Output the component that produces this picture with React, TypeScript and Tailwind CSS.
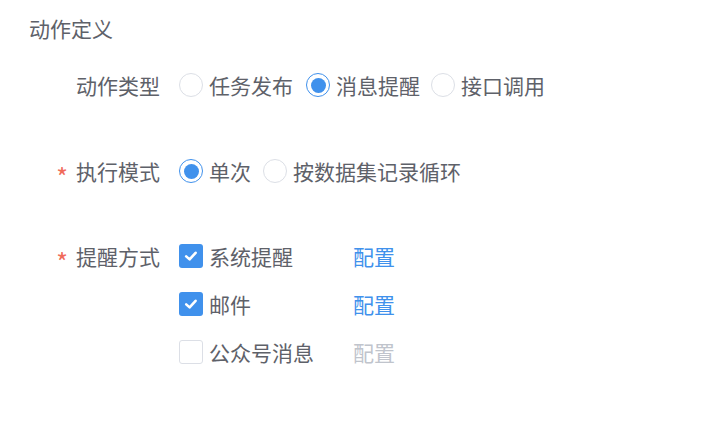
import React from "react";

function Radio({ checked, label }: { checked?: boolean; label: string }) {
  return (
    <div className="flex items-center">
      {checked ? (
        <span className="flex h-[24px] w-[24px] items-center justify-center rounded-full border-[1.5px] border-[#4091ec] bg-white">
          <span className="h-[15px] w-[15px] rounded-full bg-[#4091ec]" />
        </span>
      ) : (
        <span className="h-[24px] w-[24px] rounded-full border border-[#dcdfe6] bg-white" />
      )}
      <span className="ml-[6px]">{label}</span>
    </div>
  );
}

function Checkbox({ checked, label, disabledLink }: { checked?: boolean; label: string; disabledLink?: boolean }) {
  return (
    <div className="flex h-[48px] items-center">
      <div className="flex w-[174px] items-center">
        {checked ? (
          <span className="flex h-[24px] w-[24px] items-center justify-center rounded-[3px] bg-[#4091ec]">
            <svg width="16" height="16" viewBox="0 0 16 16">
              <path d="M3.2 8.4 L6.6 11.4 L12.6 4.8" fill="none" stroke="white" strokeWidth="2.6" strokeLinecap="round" strokeLinejoin="round" />
            </svg>
          </span>
        ) : (
          <span className="h-[24px] w-[24px] rounded-[3px] border border-[#dcdfe6] bg-white" />
        )}
        <span className="ml-[6px]">{label}</span>
      </div>
      <span className={disabledLink ? "text-[#c0c4cc]" : "text-[#4091ec]"}>配置</span>
    </div>
  );
}

function Label({ text, required }: { text: string; required?: boolean }) {
  return (
    <div className="flex h-[48px] w-[160px] shrink-0 items-center justify-end">
      {required && (
        <span className="relative top-[5px] mr-[8px] text-[25px] leading-[30px] text-[#f06a5a]">*</span>
      )}
      <span>{text}</span>
    </div>
  );
}

export default function App() {
  return (
    <div
      className="h-[421px] w-[717px] bg-white text-[21px] leading-[30px] text-[#5e6169]"
      style={{ fontFamily: '"Noto Sans CJK SC", "Noto Sans", sans-serif' }}
    >
      <div className="pl-[29px] pt-[13px] text-[#5e6169]">动作定义</div>
      <div className="mt-[18px] flex flex-col gap-[38px]">
        <div className="flex">
          <Label text="动作类型" />
          <div className="ml-[19px] flex h-[48px] items-center gap-[13px]">
            <Radio label="任务发布" />
            <Radio checked label="消息提醒" />
            <div className="-ml-[2px]">
              <Radio label="接口调用" />
            </div>
          </div>
        </div>
        <div className="flex">
          <Label text="执行模式" required />
          <div className="ml-[19px] flex h-[48px] items-center gap-[12px]">
            <Radio checked label="单次" />
            <Radio label="按数据集记录循环" />
          </div>
        </div>
        <div className="-mt-[1px] flex">
          <Label text="提醒方式" required />
          <div className="ml-[19px] flex flex-col">
            <Checkbox checked label="系统提醒" />
            <Checkbox checked label="邮件" />
            <Checkbox label="公众号消息" disabledLink />
          </div>
        </div>
      </div>
    </div>
  );
}
